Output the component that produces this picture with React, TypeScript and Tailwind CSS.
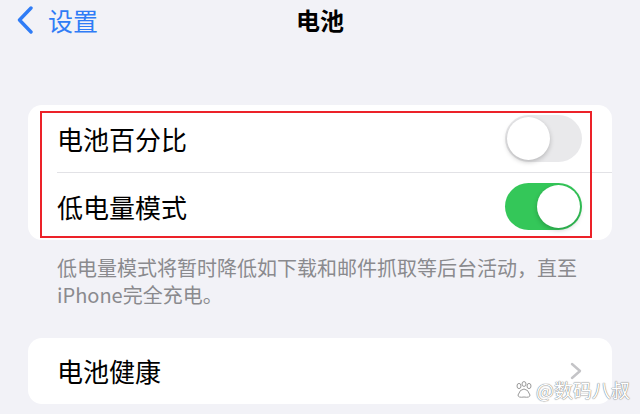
import React from 'react';

const Toggle: React.FC<{ on: boolean }> = ({ on }) => (
    <div
        className={`flex h-[47px] w-[77px] items-center rounded-full p-[2px] ${
            on ? 'justify-end bg-[#34c759]' : 'justify-start bg-[#e9e9eb]'
        }`}
    >
        <div className="h-[43px] w-[43px] rounded-full bg-white shadow-[0_2px_5px_rgba(0,0,0,0.22)]" />
    </div>
);

const App: React.FC = () => {
    return (
        <div
            className="relative h-[414px] w-[640px] overflow-hidden bg-[#f2f2f7]"
            style={{ fontFamily: '"Noto Sans CJK SC", "Noto Sans", sans-serif' }}
        >
            <header className="grid h-[40px] grid-cols-[1fr_auto_1fr] items-center">
                <div className="flex items-center gap-[14px] pl-[16px] text-[#2f7cf6]">
                    <svg width="18" height="28" viewBox="0 0 18 28" fill="none">
                        <path d="M15 2 L3.5 14 L15 26" stroke="currentColor" strokeWidth="3.4" strokeLinecap="round" strokeLinejoin="round" />
                    </svg>
                    <span className="text-[25px] leading-none">设置</span>
                </div>
                <h1 className="text-[24px] font-bold leading-none text-black">电池</h1>
                <div />
            </header>

            <section className="mx-[28px] mt-[65px]">
                <div className="relative rounded-[14px] bg-white">
                    <div className="flex h-[67px] items-center justify-between pl-[29px] pr-[30px]">
                        <span className="text-[26px] leading-none text-black">电池百分比</span>
                        <Toggle on={false} />
                    </div>
                    <div className="ml-[29px] h-px bg-[#e2e2e6]" />
                    <div className="flex h-[67px] items-center justify-between pl-[29px] pr-[30px]">
                        <span className="text-[26px] leading-none text-black">低电量模式</span>
                        <Toggle on={true} />
                    </div>
                    {/* annotation frame */}
                    <div className="pointer-events-none absolute top-[6px] right-[20px] bottom-[2px] left-[12px] border-2 border-[#ec2229]" />
                </div>
                <p className="mt-[14px] pl-[29px] pr-[20px] text-[20px] leading-[27px] text-[#8a8a8e]">
                    低电量模式将暂时降低如下载和邮件抓取等后台活动，直至
                    <br />
                    iPhone完全充电。
                </p>
            </section>

            <section className="mx-[28px] mt-[30px]">
                <div className="flex h-[66px] items-center justify-between rounded-[14px] bg-white pl-[29px] pr-[30px]">
                    <span className="text-[26px] leading-none text-black">电池健康</span>
                    <svg width="12" height="18" viewBox="0 0 12 18" fill="none">
                        <path d="M2 2 L10 9 L2 16" stroke="#c4c4c7" strokeWidth="2.4" strokeLinecap="round" strokeLinejoin="round" />
                    </svg>
                </div>
            </section>

            {/* watermark */}
            <div className="absolute right-[10px] bottom-[15px] flex items-center gap-[2px] text-[19px] leading-none text-white [text-shadow:0_0_1px_#777,0_0_1px_#777]">
                <svg width="20" height="18" viewBox="0 0 20 18" fill="white" stroke="#999" strokeWidth="1">
                    <ellipse cx="5" cy="5" rx="2" ry="2.6" />
                    <ellipse cx="10" cy="3" rx="2" ry="2.4" />
                    <ellipse cx="15" cy="5" rx="2" ry="2.6" />
                    <path d="M4 14 Q6 8 10 8 Q14 8 16 14 Q16 17 10 16 Q4 17 4 14Z" />
                </svg>
                <span>@数码八叔</span>
            </div>
        </div>
    );
};

export default App;
